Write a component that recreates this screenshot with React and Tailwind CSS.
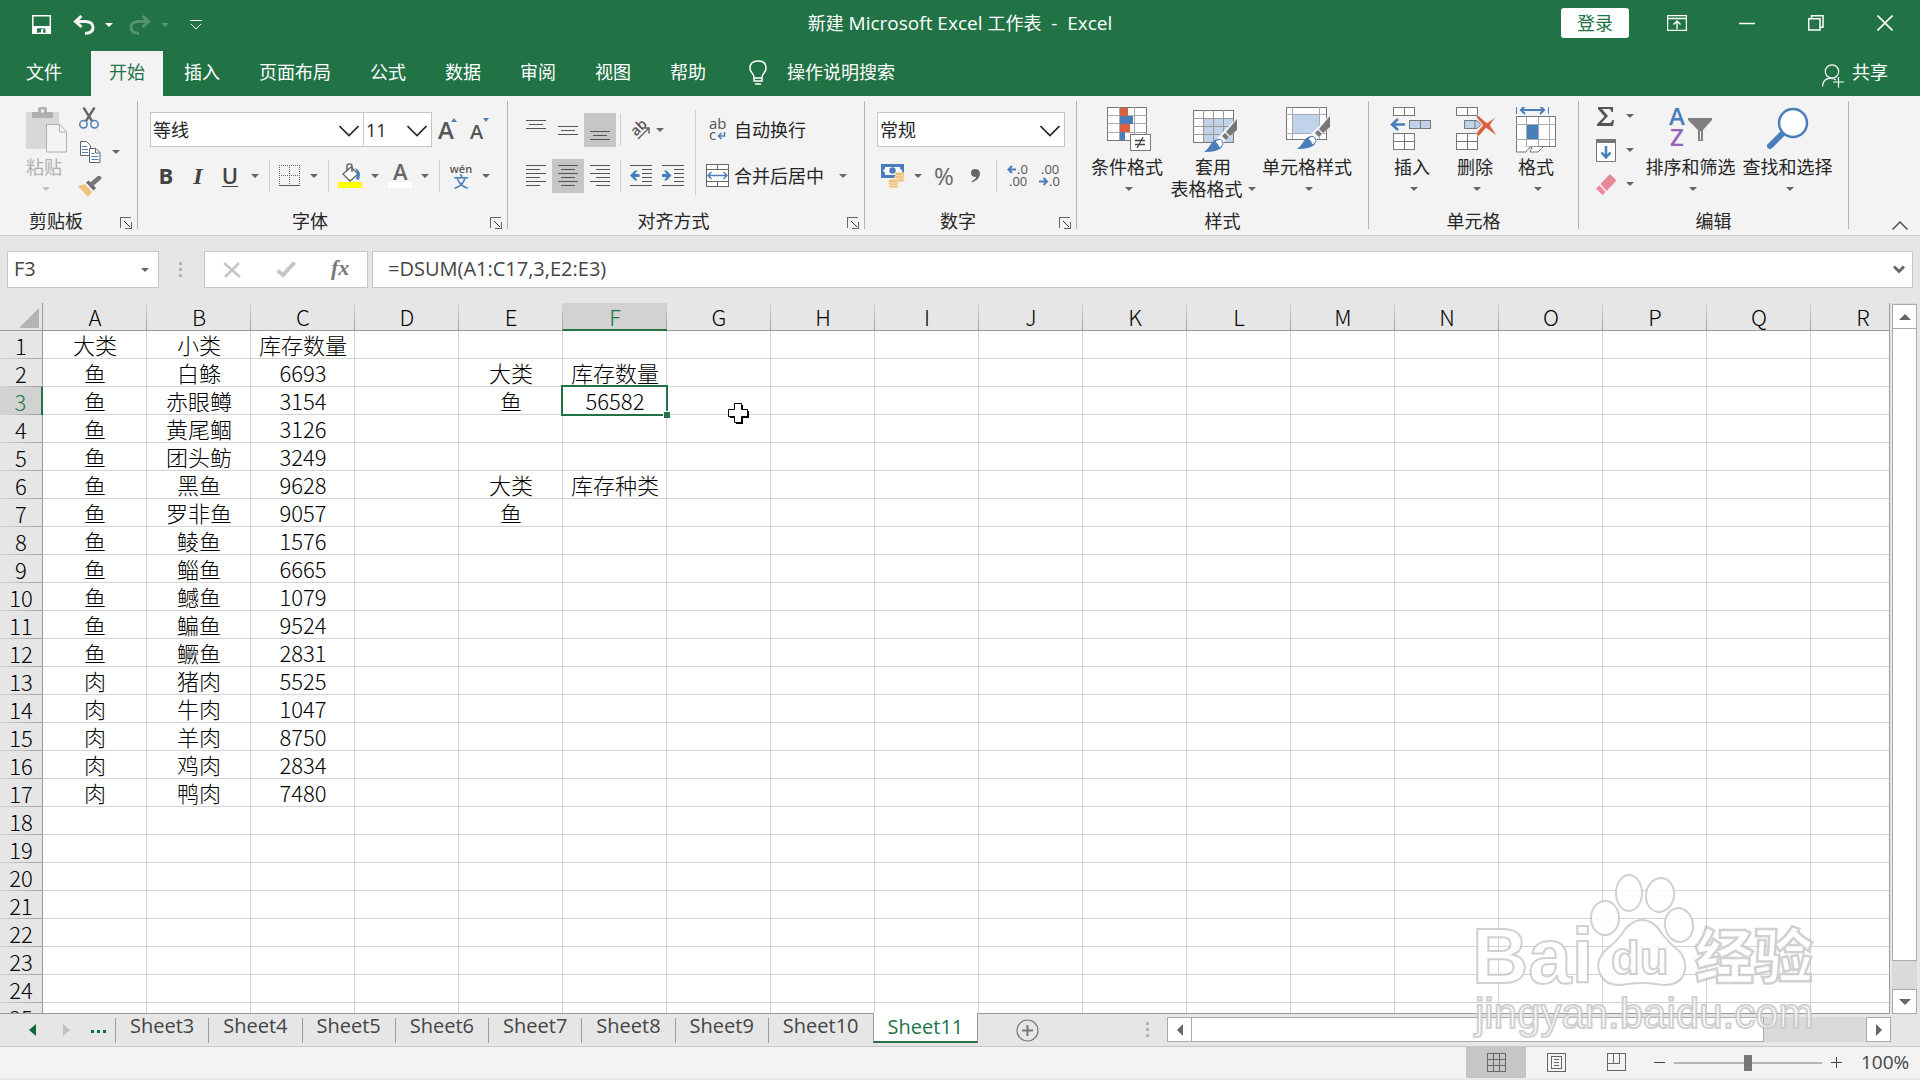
import { useState } from "react";

const COLUMNS = "ABCDEFGHIJKLMNOPQR".split("");

const STOCK = [
  ["鱼", "白鲦", "6693"],
  ["鱼", "赤眼鳟", "3154"],
  ["鱼", "黄尾鲴", "3126"],
  ["鱼", "团头鲂", "3249"],
  ["鱼", "黑鱼", "9628"],
  ["鱼", "罗非鱼", "9057"],
  ["鱼", "鲮鱼", "1576"],
  ["鱼", "鲻鱼", "6665"],
  ["鱼", "鳡鱼", "1079"],
  ["鱼", "鳊鱼", "9524"],
  ["鱼", "鳜鱼", "2831"],
  ["肉", "猪肉", "5525"],
  ["肉", "牛肉", "1047"],
  ["肉", "羊肉", "8750"],
  ["肉", "鸡肉", "2834"],
  ["肉", "鸭肉", "7480"],
];

const CELLS = {
  A1: "大类",
  B1: "小类",
  C1: "库存数量",
  E2: "大类",
  F2: "库存数量",
  E3: "鱼",
  F3: "56582",
  E6: "大类",
  F6: "库存种类",
  E7: "鱼",
};

STOCK.forEach(([kind, name, amount], index) => {
  CELLS[`A${index + 2}`] = kind;
  CELLS[`B${index + 2}`] = name;
  CELLS[`C${index + 2}`] = amount;
});

const TABS = ["开始", "插入", "页面布局", "公式", "数据", "审阅", "视图", "帮助"];

const SHEETS = [
  "Sheet3",
  "Sheet4",
  "Sheet5",
  "Sheet6",
  "Sheet7",
  "Sheet8",
  "Sheet9",
  "Sheet10",
  "Sheet11",
];

/* ---------- small shared parts ---------- */

const Caret = ({ className = "text-[#666666]" }) => (
  <svg width="8" height="4" viewBox="0 0 8 4" className={className} aria-hidden="true">
    <path d="M0 0h8L4 4z" fill="currentColor" />
  </svg>
);

const CaretButton = ({ label, className = "w-[18px]" }) => (
  <button aria-label={label} className={`flex h-full items-center justify-center ${className}`}>
    <Caret />
  </button>
);

const Tool = ({ label, className = "w-8", active, children }) => (
  <button
    aria-label={label}
    className={`flex h-full shrink-0 items-center justify-center ${className} ${
      active ? "bg-[#c6c6c6]" : ""
    }`}
  >
    {children}
  </button>
);

const Divider = () => <div className="mx-[5px] h-8 w-px shrink-0 bg-[#d0d0d0]" />;

const Chevron = () => (
  <svg width="20" height="12" viewBox="0 0 20 12" fill="none" className="pointer-events-none absolute right-1 top-3">
    <path d="M0.5 1 10 10.5 19.5 1" stroke="#262626" strokeWidth="1.6" />
  </svg>
);

const Combo = ({ label, value, className }) => (
  <div className={`relative h-[35px] border border-[#c6c6c6] bg-white ${className}`}>
    <select
      aria-label={label}
      className="h-full w-full appearance-none bg-transparent pl-[2px] text-lg leading-8 text-[#262626] outline-none"
    >
      <option>{value}</option>
    </select>
    <Chevron />
  </div>
);

const Group = ({ title, launcher, className, children }) => (
  <section className="flex shrink-0">
    <div className={`flex flex-col ${className}`}>
      <div className="flex h-[115px]">{children}</div>
      <div className="flex h-5 items-center">
        <span className="flex-1 text-center leading-5">{title}</span>
        {launcher && (
          <button aria-label={`${title}设置`} className="ml-2 mr-[5px] mt-1">
            <svg width="12" height="12" viewBox="0 0 12 12" fill="none" stroke="#666" shapeRendering="crispEdges">
              <path d="M0.5 11V0.5H11" />
              <path d="M11.5 5v6.5H5" />
              <path d="M4 4l6 6" stroke="#333" shapeRendering="auto" />
            </svg>
          </button>
        )}
      </div>
    </div>
    <div className="mt-[5px] h-32 w-px bg-[#b4b4b4]" />
  </section>
);

const BigButton = ({ icon, lines, className }) => (
  <button className={`flex h-full flex-col items-center pt-[10px] leading-[22px] ${className}`}>
    <span className="flex h-[50px] items-start justify-center pt-px">{icon}</span>
    <span className="whitespace-nowrap">{lines[0]}</span>
    <span className="flex h-[22px] items-center whitespace-nowrap">
      {lines[1]}
      <span className={lines[1] ? "ml-[5px]" : "ml-1"}>
        <Caret />
      </span>
    </span>
  </button>
);

/* ---------- ribbon icons ---------- */

const Lines = ({ rows, w = 20, h = 22, children }) => (
  <svg width={w} height={h} viewBox={`0 0 ${w} ${h}`} shapeRendering="crispEdges">
    {rows.map(([x, y, len]) => (
      <rect key={y} x={x} y={y} width={len} height="1" fill="#555" />
    ))}
    {children}
  </svg>
);

const PasteIcon = () => (
  <svg width="42" height="46" viewBox="0 0 42 46">
    <rect x="0" y="5" width="33" height="37" rx="1" fill="#d8d8d8" />
    <path d="M6 5h6V2q0-2 2-2h5q2 0 2 2v3h6v6H6z" fill="#b0b0b0" />
    <circle cx="16.500" cy="4" r="1.700" fill="#f3f3f3" />
    <path d="M20.500 17.500H34L40.500 24.500V45H20.500z" fill="#f3f3f3" stroke="#b0b0b0" />
    <path d="M33.500 17.500V25H40.500" fill="none" stroke="#b0b0b0" />
  </svg>
);

const CutIcon = () => (
  <svg width="20" height="22" viewBox="0 0 20 22" fill="none">
    <path d="M4.500 0.500 13 14M15.500 0.500 7 14" stroke="#666" strokeWidth="2.400" />
    <circle cx="4.500" cy="17.300" r="3.700" stroke="#4a7ebb" strokeWidth="1.500" />
    <circle cx="15.500" cy="17.300" r="3.700" stroke="#4a7ebb" strokeWidth="1.500" />
  </svg>
);

const CopyIcon = () => (
  <svg width="21" height="23" viewBox="0 0 21 23" fill="#fff" stroke="#666">
    <path d="M0.500 0.500H6.500L10.500 4.500V14.500H0.500z" />
    <path d="M2 5.500h5M2 8.500h6M2 11.500h6" stroke="#4a7ebb" />
    <path d="M9.500 7.500H16L20 11.500V21.500H9.500z" />
    <path d="M15.500 7.500V12H20" fill="none" />
    <path d="M11.500 12.500h3M11.500 15.500h7M11.500 18.500h7" stroke="#4a7ebb" />
  </svg>
);

const PainterIcon = () => (
  <svg width="24" height="21" viewBox="0 0 24 21">
    <path d="M0 10 7 8l7 8-4 5z" fill="#f0c27d" />
    <path d="M8 6.500 10.500 4.500 18 12 15.500 14.500z" fill="#666" />
    <path d="M14 8 21 2" stroke="#777" strokeWidth="4.500" strokeLinecap="round" />
  </svg>
);

const BordersIcon = () => (
  <svg width="22" height="22" viewBox="0 0 22 22" fill="none" stroke="#666" shapeRendering="crispEdges">
    <path d="M0.500 0V20M10.500 0V20M20.500 0V20M0 0.500H21M0 10.500H21" strokeDasharray="1 1" />
    <path d="M0 20.500H21" stroke="#555" />
  </svg>
);

const FillColorIcon = () => (
  <svg width="24" height="25" viewBox="0 0 24 25">
    <path d="M5 11 13 4 20 11 12 18z" fill="#fff" stroke="#666" strokeWidth="1.300" />
    <path d="M9 8V3q0-2 2.500-2T14 3v6" fill="none" stroke="#666" strokeWidth="1.500" />
    <path d="M17 5q5 2 5 7l-1 5-3-1 1-5q0-3-2-6z" fill="#4a7ebb" />
    <rect x="0" y="19" width="24" height="6" fill="#ffff00" />
  </svg>
);

const OrientationIcon = () => (
  <svg width="22" height="22" viewBox="0 0 22 22">
    <text x="3" y="16" transform="rotate(-45 7 12)" fontSize="14" fontFamily="Open Sans, sans-serif" fontWeight="600" fill="#555">
      ab
    </text>
    <path d="M9 20 20 9M14.500 9H20V14.500" fill="none" stroke="#666" strokeWidth="1.500" />
  </svg>
);

const WrapIcon = () => (
  <svg width="18" height="24" viewBox="0 0 18 24" fontFamily="Open Sans, sans-serif" fontSize="15" fill="#555">
    <text x="0" y="11">ab</text>
    <text x="0" y="22">c</text>
    <path d="M15.500 14v4H10M12.500 15l-3 3 3 3" fill="none" stroke="#4a7ebb" strokeWidth="1.500" />
  </svg>
);

const MergeIcon = () => (
  <svg width="24" height="24" viewBox="0 0 24 24" fill="none" stroke="#666" shapeRendering="crispEdges">
    <path d="M0.500 0.500H22.500V22.500H0.500z" fill="#fff" />
    <path d="M0 5.500H23M0 17.500H23M11.500 0V5M11.500 18V23" />
    <path d="M2 11.500H21M5.500 8 2 11.500 5.500 15M17.500 8 21 11.500 17.500 15" stroke="#4a7ebb" strokeWidth="1.500" shapeRendering="auto" />
  </svg>
);

const MoneyIcon = () => (
  <svg width="24" height="24" viewBox="0 0 24 24">
    <rect x="0" y="0" width="23" height="14" fill="#4a7ebb" />
    <path d="M4 3H19V4q0 2 2 2v3H4V8Q2 8 2 7t2-2z" fill="#fff" />
    <path d="M4 8H19V11H4z" fill="#fff" />
    <circle cx="11.500" cy="6.500" r="3.200" fill="#4a7ebb" />
    <g fill="#efc27c" stroke="#f8eeda" strokeWidth="0.700">
      <ellipse cx="18.500" cy="16" rx="5" ry="2" />
      <ellipse cx="18.500" cy="13" rx="5" ry="2" />
      <ellipse cx="18.500" cy="10" rx="5" ry="2" />
      <ellipse cx="12.500" cy="22" rx="5" ry="2" />
      <ellipse cx="12.500" cy="19.500" rx="5" ry="2" />
      <ellipse cx="12.500" cy="17" rx="5" ry="2" />
    </g>
  </svg>
);

const DecimalIcon = ({ more }) => (
  <svg width="24" height="24" viewBox="0 0 24 24" fontFamily="Open Sans, sans-serif" fontSize="13" fill="#555">
    <text x={more ? 11 : 3} y="10">{more ? ".0" : ".00"}</text>
    <text x={more ? 3 : 11} y="22">{more ? ".00" : ".0"}</text>
    {more ? (
      <path d="M10 5.500H3M6 2 2.500 5.500 6 9" fill="none" stroke="#4a7ebb" strokeWidth="2" />
    ) : (
      <path d="M1 17.500H8M5.500 14 9 17.500 5.500 21" fill="none" stroke="#4a7ebb" strokeWidth="2" />
    )}
  </svg>
);

const ConditionalIcon = () => (
  <svg width="48" height="46" viewBox="-4 0 48 46" shapeRendering="crispEdges">
    <path d="M0.500 0.500H39.500V33.500H0.500z" fill="#fff" stroke="#777" />
    <path d="M0 8.500H40M0 16.500H40M0 25.500H40M12.500 0V33M27.500 0V33" stroke="#aaa" />
    <rect x="13" y="1" width="8" height="8" fill="#d9603f" />
    <rect x="13" y="9" width="13" height="8" fill="#4a7ebb" />
    <rect x="13" y="17" width="10" height="8" fill="#d9603f" />
    <rect x="13" y="25" width="5" height="8" fill="#4a7ebb" />
    <path d="M23.500 27.500H43.500V43.500H23.500z" fill="#fff" stroke="#777" />
    <path d="M28 33.500H38M28 37.500H38M36 30 30 41" stroke="#444" strokeWidth="1.300" shapeRendering="auto" />
  </svg>
);

const BrushOver = () => (
  <g>
    <path d="M44 8 24 28 29 34 44 20z" fill="#f3f3f3" />
    <path d="M44 9 33 22 37 26 44 20z" fill="#777" />
    <path d="M32 23 36 27 33 30 29 26z" fill="#777" />
    <path d="M11 42Q15 39 18 34 21 29 26 29 31 31 29 37 26 42 11 42z" fill="#4a7ebb" />
    <path d="M22 32Q26 27 29 31 32 35 26 38 25 33 22 32z" fill="#fff" stroke="#4a7ebb" />
  </g>
);

const TableFormatIcon = () => (
  <svg width="48" height="46" viewBox="-4 0 48 46">
    <g transform="translate(0 3)">
      <g shapeRendering="crispEdges">
        <path d="M0.500 0.500H40.500V32.500H0.500z" fill="#fff" stroke="#777" />
        <rect x="11" y="9" width="29" height="23" fill="#c1d3ea" />
        <path d="M0 8.500H40M0 16.500H40M0 24.500H40M10.500 0V32M20.500 0V32M30.500 0V32" stroke="#999" />
      </g>
      <BrushOver />
    </g>
  </svg>
);

const CellStyleIcon = () => (
  <svg width="46" height="46" viewBox="-2 0 46 46">
    <g shapeRendering="crispEdges">
      <path d="M0.500 0.500H40.500V32.500H0.500z" fill="#fff" stroke="#777" />
      <rect x="7" y="8" width="27" height="18" fill="#c1d3ea" />
      <path d="M0 7.500H40M0 26.500H40M6.500 0V32M33.500 0V32" stroke="#aaa" />
    </g>
    <BrushOver />
  </svg>
);

const GridPieces = () => (
  <g fill="#fff" stroke="#777" shapeRendering="crispEdges">
    <path d="M3.500 0.500H24.500V8.500H3.500zM14 0.500V8.500" />
    <path d="M3.500 26.500H24.500V42.500H3.500zM14 26.500V42.500M3.500 34.500H24.500" />
  </g>
);

const InsertIcon = () => (
  <svg width="44" height="46" viewBox="0 0 44 46">
    <GridPieces />
    <path d="M19.500 13.500H40.500V21.500H19.500zM30 13.500V21.500" fill="#c1d3ea" stroke="#777" shapeRendering="crispEdges" />
    <path d="M15 17.500H2M8 12 2 17.500 8 23" fill="none" stroke="#4a7ebb" strokeWidth="2.500" />
  </svg>
);

const DeleteIcon = () => (
  <svg width="44" height="46" viewBox="0 0 44 46">
    <GridPieces />
    <path d="M11.500 13.500H24L28 17.500 24 21.500H11.500zM22 13.500V21.500" fill="#c1d3ea" stroke="#777" />
    <path d="M23 10Q25 7 28 11L34 16 43 10 37 18 44 29 33 21 26 29Q22 29 24 25L30 18z" fill="#d9603f" stroke="#f3f3f3" strokeWidth="0.600" />
  </svg>
);

const FormatIcon = () => (
  <svg width="41" height="46" viewBox="0 0 41 46">
    <g shapeRendering="crispEdges" fill="none">
      <path d="M0.500 9.500H39.500V39.500H0.500z" fill="#fff" stroke="#777" />
      <path d="M0 17.500H39M0 32.500H39M10.500 10V39M22.500 10V39M33.500 10V39" stroke="#aaa" />
      <rect x="11" y="18" width="11" height="14" fill="#4a7ebb" />
      <path d="M0.500 -1V7M32.500 -1V7" stroke="#4a7ebb" />
    </g>
    <path d="M5 3H28M9 -1 5 3 9 7M24 -1 28 3 24 7" fill="none" stroke="#4a7ebb" strokeWidth="2" />
    <path d="M0.500 39V45H10L14 40H16L14 45H22L27 40" fill="#fff" stroke="#777" />
  </svg>
);

const SortFilterIcon = () => (
  <svg width="44" height="46" viewBox="0 0 44 46" fontFamily="Open Sans, sans-serif" fontSize="24">
    <text x="0" y="18" fill="#4a7ebb" fontWeight="600">A</text>
    <text x="1" y="39" fill="#9664b8" fontWeight="600">Z</text>
    <path d="M19 11H43V13L34 23V34H29V23L19 13z" fill="#808080" />
    <path d="M31.500 24V33" stroke="#f3f3f3" strokeWidth="1" />
  </svg>
);

const FindIcon = () => (
  <svg width="42" height="46" viewBox="0 0 42 46">
    <path d="M3 39 15 27" stroke="#4a7ebb" strokeWidth="6" strokeLinecap="round" />
    <circle cx="26" cy="16" r="14" fill="#fff" stroke="#4a7ebb" strokeWidth="2.500" />
  </svg>
);

/* ---------- page sections ---------- */

const TitleBar = () => (
  <header className="grid h-[51px] grid-cols-[1fr_auto_1fr] items-start text-white">
    <div className="flex h-12 items-center pl-8 pt-0.5">
      <button aria-label="保存">
        <svg width="20" height="20" viewBox="0 0 20 20" fill="none" stroke="#fff" strokeWidth="1.500">
          <path d="M0.800 0.800H18.300V18.300H0.800z" />
          <path d="M1 11H18V18H13V15H11V18H9V14H6V18H1z" fill="#fff" stroke="none" />
          <path d="M5.500 18V13.800H13V18" stroke="#217346" strokeWidth="1" />
        </svg>
      </button>
      <button aria-label="撤消" className="ml-[21px]">
        <svg width="22" height="20" viewBox="0 0 22 20" fill="none" stroke="#f3f3f3" strokeWidth="3">
          <path d="M2 6.500H13Q20 7 20 12.500 20 18 12 18.500" />
          <path d="M8.500 1 2.500 6.500 8.500 12" />
        </svg>
      </button>
      <button aria-label="撤消历史" className="ml-[10px]">
        <Caret className="text-white" />
      </button>
      <button aria-label="恢复" className="ml-4 opacity-25">
        <svg width="22" height="20" viewBox="0 0 22 20" fill="none" stroke="#f3f3f3" strokeWidth="3">
          <path d="M20 6.500H9Q2 7 2 12.500 2 18 10 18.500" />
          <path d="M13.500 1 19.500 6.500 13.500 12" />
        </svg>
      </button>
      <button aria-label="恢复历史" className="ml-[10px] opacity-25">
        <Caret className="text-white" />
      </button>
      <button aria-label="自定义快速访问工具栏" className="ml-[21px]">
        <svg width="12" height="10" viewBox="0 0 12 10" fill="none" stroke="#fff">
          <path d="M0 0.500H12M1 4 6 9 11 4" />
        </svg>
      </button>
    </div>
    <h1 className="whitespace-pre text-[19px] leading-[46px]">
      <span className="text-lg">新建</span> Microsoft Excel <span className="text-lg">工作表</span>{"  -  Excel"}
    </h1>
    <div className="flex h-[46px] items-center justify-end pr-[27px]">
      <button className="mr-[38px] h-[30px] rounded-[3px] bg-white px-4 text-lg leading-[30px] text-[#217346]">登录</button>
      <button aria-label="功能区显示选项">
        <svg width="20" height="16" viewBox="0 0 20 16" fill="none" stroke="#fff">
          <path d="M0.500 0.500H19.500V15.500H0.500z" strokeWidth="1.400" />
          <path d="M1 3.500H19M10 14V6M6.500 9.500 10 6 13.500 9.500" strokeWidth="1.400" />
        </svg>
      </button>
      <button aria-label="最小化" className="ml-[52px]">
        <svg width="16" height="16" viewBox="0 0 16 16" stroke="#fff">
          <path d="M0 8.500H16" strokeWidth="1.500" />
        </svg>
      </button>
      <button aria-label="向下还原" className="ml-[53px]">
        <svg width="16" height="16" viewBox="0 0 16 16" fill="none" stroke="#fff" strokeWidth="1.500">
          <path d="M0.700 3.700H12V15H0.700zM3.500 3.500V0.700H15V12.200H12" />
        </svg>
      </button>
      <button aria-label="关闭" className="ml-[53px]">
        <svg width="16" height="16" viewBox="0 0 16 16" stroke="#fff" strokeWidth="1.600">
          <path d="M0.500 0.500 15.500 15.500M15.500 0.500 0.500 15.500" />
        </svg>
      </button>
    </div>
  </header>
);

const RibbonTabs = ({ active, onSelect }) => (
  <nav className="flex h-[45px] items-stretch text-lg leading-[42px] text-white">
    <button className="ml-2 mr-[11px] px-[18px] pb-[3px]">文件</button>
    <div className="flex gap-[3px]">
      {TABS.map((tab) => (
        <button
          key={tab}
          onClick={() => onSelect(tab)}
          className={`px-[18px] pb-[3px] ${tab === active ? "bg-[#f3f3f3] text-[#217346]" : ""}`}
        >
          {tab}
        </button>
      ))}
    </div>
    <button className="ml-[25px] flex items-center pb-[3px]">
      <svg width="18" height="25" viewBox="0 0 18 25" fill="none" stroke="#fff" strokeWidth="1.500">
        <path d="M5 18Q5 15 3 13 1 11 1 8 1 1 9 1T17 8Q17 11 15 13 13 15 13 18zM5 18V21H13V18M6 24H12" />
      </svg>
      <span className="ml-5">操作说明搜索</span>
    </button>
    <button className="ml-auto mr-8 flex items-center pb-[3px]">
      <svg width="22" height="24" viewBox="0 0 22 24" fill="none" stroke="#fff" strokeWidth="1.200" className="mt-2">
        <circle cx="10" cy="7.500" r="6.700" />
        <path d="M0.500 22.500Q1 14 9 14.500 12 14.500 14 16M16.500 13V23.500M11 18H22" />
      </svg>
      <span className="ml-2">共享</span>
    </button>
  </nav>
);

const Ribbon = () => (
  <div className="flex h-[140px] shrink-0 overflow-hidden border-b border-[#d2d2d2] bg-[#f3f3f3] text-lg text-[#262626]">
    <Group title="剪贴板" launcher className="w-[137px]">
      <button className="ml-[26px] mt-[11px] flex w-[42px] flex-col items-start text-[#b0b0b0]">
        <PasteIcon />
        <span className="mt-[3px] leading-[22px]">粘贴</span>
        <span className="ml-4 mt-[9px]">
          <Caret className="text-[#c0c0c0]" />
        </span>
      </button>
      <div className="ml-[10px] mt-[9px] flex flex-col items-start">
        <button aria-label="剪切" className="ml-px flex h-[26px] items-center">
          <CutIcon />
        </button>
        <div className="mt-2 flex h-[26px]">
          <button aria-label="复制" className="ml-0.5">
            <CopyIcon />
          </button>
          <CaretButton label="复制选项" className="ml-[6px] w-[18px]" />
        </div>
        <button aria-label="格式刷" className="mt-[11px]">
          <PainterIcon />
        </button>
      </div>
    </Group>

    <Group title="字体" launcher className="w-[369px]">
      <div className="flex flex-col gap-[11px] pl-3 pt-4">
        <div className="flex">
          <Combo label="字体" value="等线" className="w-[214px]" />
          <Combo label="字号" value="11" className="-ml-px w-[69px]" />
          <Tool label="增大字号">
            <svg width="22" height="26" viewBox="0 0 22 26">
              <text x="1" y="22" fontFamily="Open Sans, sans-serif" fontWeight="600" fontSize="24" fill="#555">A</text>
              <path d="M14 5H20L17 1z" fill="#4a7ebb" />
            </svg>
          </Tool>
          <Tool label="减小字号">
            <svg width="22" height="26" viewBox="0 0 22 26">
              <text x="1" y="22" fontFamily="Open Sans, sans-serif" fontWeight="600" fontSize="20" fill="#555">A</text>
              <path d="M14 1H20L17 5z" fill="#4a7ebb" />
            </svg>
          </Tool>
        </div>
        <div className="flex h-[35px] items-center text-[22px] text-[#444444]">
          <Tool label="加粗"><span className="font-bold">B</span></Tool>
          <Tool label="倾斜"><span className="font-['Liberation_Serif'] text-2xl font-bold italic">I</span></Tool>
          <Tool label="下划线"><span className="font-semibold underline decoration-1 underline-offset-2">U</span></Tool>
          <CaretButton label="下划线选项" />
          <Divider />
          <Tool label="边框" className="w-[30px]"><BordersIcon /></Tool>
          <CaretButton label="边框选项" />
          <Divider />
          <Tool label="填充颜色"><FillColorIcon /></Tool>
          <CaretButton label="填充颜色选项" />
          <Tool label="字体颜色">
            <svg width="24" height="25" viewBox="0 0 24 25">
              <text x="5" y="17" fontFamily="Open Sans, sans-serif" fontWeight="600" fontSize="22" fill="#666">A</text>
              <rect x="0" y="19" width="24" height="6" fill="#fff" />
            </svg>
          </Tool>
          <CaretButton label="字体颜色选项" />
          <Divider />
          <Tool label="拼音">
            <svg width="24" height="28" viewBox="0 0 24 28">
              <text x="12" y="11" textAnchor="middle" fontFamily="Open Sans, sans-serif" fontSize="11" fontWeight="600" fill="#555">wén</text>
              <text x="12" y="25" textAnchor="middle" fontFamily="Noto Sans CJK SC, sans-serif" fontSize="15" fontWeight="500" fill="#4a7ebb">文</text>
            </svg>
          </Tool>
          <CaretButton label="拼音选项" />
        </div>
      </div>
    </Group>

    <Group title="对齐方式" launcher className="w-[356px]">
      <div className="flex pl-3 pt-[17px]">
        <div className="flex w-[170px] flex-col gap-3">
          <div className="flex h-[34px] items-center">
            <Tool label="顶端对齐"><Lines rows={[[0, 1, 20], [3, 5, 14], [0, 9, 20]]} /></Tool>
            <Tool label="垂直居中"><Lines rows={[[0, 7, 20], [3, 11, 14], [0, 15, 20]]} /></Tool>
            <Tool label="底端对齐" active><Lines rows={[[0, 12, 20], [3, 16, 14], [0, 20, 20]]} /></Tool>
            <div className="ml-1 mr-[5px] h-8 w-px bg-[#d0d0d0]" />
            <Tool label="方向" className="w-7"><OrientationIcon /></Tool>
            <CaretButton label="方向选项" className="w-3" />
          </div>
          <div className="flex h-[34px] items-center">
            <Tool label="左对齐"><Lines rows={[[0, 0, 20], [0, 4, 14], [0, 8, 20], [0, 12, 14], [0, 16, 20], [0, 20, 14]]} /></Tool>
            <Tool label="居中" active><Lines rows={[[0, 0, 20], [3, 4, 14], [0, 8, 20], [3, 12, 14], [0, 16, 20], [3, 20, 14]]} /></Tool>
            <Tool label="右对齐"><Lines rows={[[0, 0, 20], [6, 4, 14], [0, 8, 20], [6, 12, 14], [0, 16, 20], [6, 20, 14]]} /></Tool>
            <div className="ml-1 mr-1 h-8 w-px bg-[#d0d0d0]" />
            <Tool label="减少缩进量">
              <Lines w={22} rows={[[0, 0, 22], [12, 4, 10], [12, 8, 10], [12, 12, 10], [12, 16, 10], [0, 20, 22]]}>
                <path d="M0 10.500 5 5.500H7.500L5 9H9.500V12H5L7.500 15.500H5z" fill="#4a7ebb" shapeRendering="auto" />
              </Lines>
            </Tool>
            <Tool label="增加缩进量">
              <Lines w={22} rows={[[0, 0, 22], [12, 4, 10], [12, 8, 10], [12, 12, 10], [12, 16, 10], [0, 20, 22]]}>
                <path d="M9.500 10.500 4.500 5.500H2L4.500 9H0V12H4.500L2 15.500H4.500z" fill="#4a7ebb" shapeRendering="auto" />
              </Lines>
            </Tool>
          </div>
        </div>
        <div className="mx-[5px] -mt-[3px] h-[85px] w-px bg-[#d0d0d0]" />
        <div className="flex flex-col gap-3 pl-[5px]">
          <button className="flex h-[34px] items-center">
            <span className="flex w-7 pl-[3px]"><WrapIcon /></span>
            自动换行
          </button>
          <div className="flex h-[34px] items-center">
            <button className="flex items-center">
              <span className="w-7"><MergeIcon /></span>
              合并后居中
            </button>
            <CaretButton label="合并选项" className="ml-[10px] w-[18px]" />
          </div>
        </div>
      </div>
    </Group>

    <Group title="数字" launcher className="w-[211px]">
      <div className="flex flex-col gap-[11px] pl-3 pt-4">
        <Combo label="数字格式" value="常规" className="w-[188px]" />
        <div className="flex h-[35px] items-center text-[#666666]">
          <Tool label="会计数字格式"><MoneyIcon /></Tool>
          <CaretButton label="会计数字格式选项" />
          <Tool label="百分比样式" className="w-[34px]"><span className="text-2xl">%</span></Tool>
          <Tool label="千位分隔样式" className="w-[30px]">
            <svg width="10" height="14" viewBox="0 0 10 14">
              <path d="M4 0Q9 0 9 5T1 13.500Q0 13 1 12 5 10 5 8 0 8 0 4 0 0 4 0z" fill="#666" />
            </svg>
          </Tool>
          <Divider />
          <Tool label="增加小数位数"><DecimalIcon more /></Tool>
          <Tool label="减少小数位数"><DecimalIcon /></Tool>
        </div>
      </div>
    </Group>

    <Group title="样式" className="w-[291px]">
      <div className="flex pl-[11px]">
        <BigButton icon={<ConditionalIcon />} lines={["条件格式"]} className="w-[78px]" />
        <BigButton icon={<TableFormatIcon />} lines={["套用", "表格格式"]} className="w-[94px]" />
        <BigButton icon={<CellStyleIcon />} lines={["单元格样式"]} className="w-[94px]" />
      </div>
    </Group>

    <Group title="单元格" className="w-[209px]">
      <div className="flex pl-[11px]">
        <BigButton icon={<InsertIcon />} lines={["插入"]} className="w-16" />
        <BigButton icon={<DeleteIcon />} lines={["删除"]} className="w-[62px]" />
        <BigButton icon={<FormatIcon />} lines={["格式"]} className="w-[60px]" />
      </div>
    </Group>

    <Group title="编辑" className="w-[269px]">
      <div className="flex flex-col pl-[11px] pt-0.5">
        <div className="flex h-9 items-center">
          <Tool label="自动求和">
            <svg width="18" height="19" viewBox="0 0 18 19">
              <path d="M1 0H16V5H14.500Q14 2 12 2H5L11 9 4.500 16H13Q14.500 16 15.500 13H17L16 19H0V17L7.500 9.500 1 2z" fill="#555" />
            </svg>
          </Tool>
          <CaretButton label="求和选项" className="w-4" />
        </div>
        <div className="flex h-8 items-center">
          <Tool label="填充">
            <svg width="20" height="23" viewBox="0 0 20 23">
              <path d="M0.500 0.500H19.500V22.500H0.500z" fill="#fff" stroke="#777" />
              <rect width="20" height="4" fill="#777" />
              <path d="M10 7V18M5.500 13.500 10 18.500 14.500 13.500" fill="none" stroke="#4a7ebb" strokeWidth="2.500" />
            </svg>
          </Tool>
          <CaretButton label="填充选项" className="w-4" />
        </div>
        <div className="flex h-9 items-center">
          <Tool label="清除">
            <svg width="21" height="21" viewBox="0 0 21 21" fill="#e88797">
              <path d="M14 0 20.500 6.500 10.500 17 4.500 10z" />
              <path d="M3.500 11.500 9.500 18 6.500 21 0 14.500z" />
            </svg>
          </Tool>
          <CaretButton label="清除选项" className="w-4" />
        </div>
      </div>
      <div className="ml-1 flex">
        <BigButton icon={<SortFilterIcon />} lines={["排序和筛选"]} className="w-[97px]" />
        <BigButton icon={<FindIcon />} lines={["查找和选择"]} className="w-[97px]" />
      </div>
    </Group>

    <button aria-label="折叠功能区" className="mb-[5px] ml-auto mr-3 self-end">
      <svg width="16" height="9" viewBox="0 0 16 9" fill="none" stroke="#555" strokeWidth="1.500">
        <path d="M0.500 8.500 8 1 15.500 8.500" />
      </svg>
    </button>
  </div>
);

const FormulaBar = () => (
  <div className="flex h-[67px] shrink-0 items-start pl-[7px] pr-[7px] pt-[15px] text-xl text-[#444444]">
    <div className="flex h-[37px] w-[152px] items-center border border-[#c6c6c6] bg-white">
      <input aria-label="名称框" defaultValue="F3" className="h-full w-0 flex-1 bg-transparent pb-0.5 pl-[6px] outline-none" />
      <CaretButton label="名称列表" className="mr-[5px] w-4" />
    </div>
    <div className="mx-5 flex h-[37px] flex-col justify-center gap-[3px]">
      <i className="size-[3px] bg-[#b4b4b4]" />
      <i className="size-[3px] bg-[#b4b4b4]" />
      <i className="size-[3px] bg-[#b4b4b4]" />
    </div>
    <div className="ml-0.5 flex h-[37px] w-[164px] items-center justify-around border border-[#c6c6c6] bg-white">
      <button aria-label="取消">
        <svg width="18" height="16" viewBox="0 0 18 16" stroke="#c6c6c6" strokeWidth="2.500">
          <path d="M1 1 17 15M16 1 2 15" />
        </svg>
      </button>
      <button aria-label="输入">
        <svg width="20" height="17" viewBox="0 0 20 17" fill="none" stroke="#c6c6c6" strokeWidth="4">
          <path d="M1.500 9.500 7 14 18.500 1.500" />
        </svg>
      </button>
      <button aria-label="插入函数" className="pb-1 font-['Liberation_Serif'] text-[22px] font-bold italic leading-8 text-[#777777]">
        fx
      </button>
    </div>
    <div className="ml-1 flex h-[37px] flex-1 items-center border border-[#c6c6c6] bg-white">
      <input
        aria-label="编辑栏"
        defaultValue="=DSUM(A1:C17,3,E2:E3)"
        className="h-full w-0 flex-1 bg-transparent pb-0.5 pl-[15px] outline-none"
      />
      <button aria-label="展开编辑栏" className="mr-[7px]">
        <svg width="12" height="9" viewBox="0 0 12 9" fill="none" stroke="#666" strokeWidth="3">
          <path d="M1 1.500 6 6.500 11 1.500" />
        </svg>
      </button>
    </div>
  </div>
);

const Cell = ({ value, selected }) => (
  <td className="relative h-7 border-b border-r border-[#d4d4d4] p-0 pl-px text-center">
    {value}
    {selected && (
      <div className="absolute -inset-0.5 z-10 border-2 border-[#217346]">
        <div className="absolute -bottom-1 -right-1 size-[7px] border-l border-t border-white bg-[#217346]" />
      </div>
    )}
  </td>
);

const Sheet = () => {
  const rows = Array.from({ length: 25 }, (_, i) => i + 1);

  return (
    <div className="relative min-w-0 flex-1 overflow-hidden border-b border-r border-[#9b9b9b] bg-white">
      <table className="w-[1915px] table-fixed border-separate border-spacing-0 text-[22px] font-light leading-[27px] text-black">
        <thead>
          <tr>
            <th className="h-7 w-[43px] border-b border-r border-[#9b9b9b] bg-[#e6e6e6] p-0">
              <svg width="20" height="20" viewBox="0 0 20 20" className="ml-auto mr-[3px] mt-0.5">
                <path d="M20 0V20H0z" fill="#b4b4b4" />
              </svg>
            </th>
            {COLUMNS.map((col) => (
              <th
                key={col}
                className={`h-7 p-0 font-light leading-[25px] bg-[linear-gradient(to_bottom,#d8d8d8,#9b9b9b)] bg-[length:1px_100%] bg-right bg-no-repeat ${
                  col === "F"
                    ? "border-b-2 border-[#217346] bg-[#d2d2d2] text-[#217346]"
                    : "border-b border-[#9b9b9b] bg-[#e6e6e6]"
                }`}
              >
                {col}
              </th>
            ))}
          </tr>
        </thead>
        <tbody>
          {rows.map((row) => (
            <tr key={row}>
              <th
                className={`h-7 p-0 font-light bg-[linear-gradient(to_right,#d8d8d8,#9b9b9b)] bg-[length:100%_1px] bg-bottom bg-no-repeat ${
                  row === 3
                    ? "border-r-2 border-[#217346] bg-[#d2d2d2] text-[#217346]"
                    : "border-r border-[#9b9b9b] bg-[#e6e6e6]"
                }`}
              >
                {row}
              </th>
              {COLUMNS.map((col) => (
                <Cell key={col} value={CELLS[col + row]} selected={col === "F" && row === 3} />
              ))}
            </tr>
          ))}
        </tbody>
      </table>

      {/* mouse pointer */}
      <svg width="22" height="22" viewBox="0 0 22 22" className="absolute left-[728px] top-[100px] z-20">
        <path d="M8 2H15V8H21V15H15V21H8V15H2V8H8z" fill="#000" />
        <path d="M6.500 0.500H13.500V6.500H19.500V13.500H13.500V19.500H6.500V13.500H0.500V6.500H6.500z" fill="#fff" stroke="#000" />
      </svg>
    </div>
  );
};

const ScrollArrow = ({ label, d }) => (
  <button
    aria-label={label}
    className="flex size-[25px] shrink-0 items-center justify-center border border-[#ababab] bg-white"
  >
    <svg width="12" height="12" viewBox="0 0 12 12">
      <path d={d} fill="#666" />
    </svg>
  </button>
);

const VerticalScroll = () => (
  <div className="ml-0.5 mr-[3px] flex w-[25px] flex-col bg-[#dadada] pt-px">
    <ScrollArrow label="向上滚动" d="M0 9H12L6 3z" />
    <div className="-mt-px w-full flex-1 border border-[#ababab] bg-white" />
    <div className="h-7" />
    <ScrollArrow label="向下滚动" d="M0 3H12L6 9z" />
  </div>
);

const SheetBar = ({ active, onSelect }) => (
  <div className="flex h-[33px] shrink-0 items-start border-b border-[#c6c6c6] text-xl text-[#444444]">
    <div className="flex h-[31px] w-[115px] items-center pl-[29px]">
      <button aria-label="上一张工作表">
        <svg width="7" height="12" viewBox="0 0 7 12"><path d="M7 0V12L0 6z" fill="#0f6b38" /></svg>
      </button>
      <button aria-label="下一张工作表" className="ml-[27px]">
        <svg width="7" height="12" viewBox="0 0 7 12"><path d="M0 0V12L7 6z" fill="#c0c0c0" /></svg>
      </button>
      <button aria-label="更多工作表" className="ml-[21px] mt-1 flex gap-[3px]">
        <i className="size-[3px] bg-[#0f6b38]" />
        <i className="size-[3px] bg-[#0f6b38]" />
        <i className="size-[3px] bg-[#0f6b38]" />
      </button>
    </div>
    {SHEETS.map((sheet) =>
      sheet === active ? (
        <button
          key={sheet}
          className="relative z-10 -mt-px h-[30px] border-b-2 border-l border-r border-b-[#217346] border-l-[#9b9b9b] border-r-[#9b9b9b] bg-white px-[14px] leading-[24px]"
        >
          <span className="text-[#217346]">{sheet}</span>
        </button>
      ) : (
        <button
          key={sheet}
          onClick={() => onSelect(sheet)}
          className="flex h-[29px] items-start leading-[23px]"
        >
          <span className="mt-1 h-[25px] w-px bg-[#9b9b9b]" />
          <span className="px-[14px]">{sheet}</span>
        </button>
      )
    )}
    <button aria-label="新工作表" className="ml-[38px] mt-[5px]">
      <svg width="23" height="23" viewBox="0 0 23 23" fill="none" stroke="#777">
        <circle cx="11.500" cy="11.500" r="10.500" strokeWidth="1.200" />
        <path d="M6 11.500H17M11.500 6V17" strokeWidth="2" />
      </svg>
    </button>
    <div className="ml-auto flex items-start">
      <div className="mr-[18px] mt-2 flex flex-col gap-[3px]">
        <i className="size-[3px] bg-[#b4b4b4]" />
        <i className="size-[3px] bg-[#b4b4b4]" />
        <i className="size-[3px] bg-[#b4b4b4]" />
      </div>
      <div className="mr-[29px] mt-[3px] flex w-[724px] bg-[#dadada]">
        <ScrollArrow label="向左滚动" d="M9 0V12L3 6z" />
        <div className="-ml-px h-[25px] flex-1 border border-[#ababab] bg-white" />
        <div className="w-[102px]" />
        <ScrollArrow label="向右滚动" d="M3 0V12L9 6z" />
      </div>
    </div>
  </div>
);

const StatusBar = () => (
  <footer className="flex h-[33px] shrink-0 items-center justify-end border-b-2 border-[#e9e9e9] bg-[#f3f3f3] pr-[11px] text-[#444444]">
    <button aria-label="普通" className="flex h-full w-[60px] items-center justify-center bg-[#c6c6c6]">
      <svg width="19" height="19" viewBox="0 0 19 19" fill="none" stroke="#666" shapeRendering="crispEdges">
        <path d="M0.500 0.500H18.500V18.500H0.500zM0 6.500H19M0 12.500H19M6.500 0V19M12.500 0V19" />
      </svg>
    </button>
    <button aria-label="页面布局视图" className="flex w-[60px] justify-center">
      <svg width="19" height="19" viewBox="0 0 19 19" fill="none" stroke="#666" shapeRendering="crispEdges">
        <path d="M0.500 0.500H18.500V18.500H0.500zM4.500 3.500H14.500V15.500H4.500zM7 6.500H12M7 9.500H12M7 12.500H12" />
      </svg>
    </button>
    <button aria-label="分页预览" className="flex w-[60px] justify-center">
      <svg width="19" height="19" viewBox="0 0 19 19" fill="none" stroke="#666" shapeRendering="crispEdges">
        <path d="M0.500 0.500H18.500V17.500H0.500zM6.500 0V10M12.500 0V10M0 10.500H13" />
      </svg>
    </button>
    <button aria-label="缩小" className="ml-2">
      <svg width="11" height="11" viewBox="0 0 11 11" stroke="#444"><path d="M0 5.500H11" /></svg>
    </button>
    <input
      type="range"
      aria-label="显示比例"
      defaultValue="50"
      className="mx-[9px] h-4 w-[148px] appearance-none bg-[linear-gradient(#b4b4b4,#b4b4b4)] bg-[length:100%_2px] bg-center bg-no-repeat [&::-webkit-slider-thumb]:h-4 [&::-webkit-slider-thumb]:w-2 [&::-webkit-slider-thumb]:appearance-none [&::-webkit-slider-thumb]:bg-[#777777]"
    />
    <button aria-label="放大">
      <svg width="11" height="11" viewBox="0 0 11 11" stroke="#444"><path d="M0 5.500H11M5.500 0V11" /></svg>
    </button>
    <button className="ml-[19px] w-12 whitespace-nowrap pb-0.5 text-[19px] leading-7">100%</button>
  </footer>
);

const Watermark = () => (
  <svg
    width="360"
    height="180"
    viewBox="0 0 360 180"
    className="pointer-events-none absolute bottom-[30px] right-[94px] z-30 opacity-85"
    fill="#fff"
    stroke="#cacaca"
    strokeWidth="2"
    fontFamily="Liberation Sans, Noto Sans CJK SC, sans-serif"
    fontWeight="700"
  >
    <ellipse cx="139" cy="48" rx="14" ry="17" />
    <ellipse cx="163" cy="23" rx="13" ry="18" />
    <ellipse cx="194" cy="25" rx="14" ry="17" transform="rotate(10 194 25)" />
    <ellipse cx="213" cy="55" rx="14" ry="17" transform="rotate(-8 213 55)" />
    <path d="M176 50Q188 50 196 64 204 74 214 82 222 92 218 104 212 118 190 114 176 112 162 114 140 118 134 104 128 90 142 78 150 72 156 64 164 50 176 50z" />
    <text x="6" y="113" fontSize="78">Bai</text>
    <text x="145" y="104" fontSize="47">du</text>
    <text x="229" y="108" fontSize="59" fontWeight="900" strokeWidth="2.500">经验</text>
    <text x="9" y="158" fontSize="42">
      <tspan fontWeight="400">jingyan.baidu.com</tspan>
    </text>
  </svg>
);

const App = () => {
  const [tab, setTab] = useState("开始");
  const [sheet, setSheet] = useState("Sheet11");

  return (
    <div className="relative flex h-screen flex-col overflow-hidden bg-[#e6e6e6] font-['Open_Sans','Noto_Sans_CJK_SC',sans-serif]">
      <div className="shrink-0 bg-[#217346]">
        <TitleBar />
        <RibbonTabs active={tab} onSelect={setTab} />
      </div>
      <Ribbon />
      <FormulaBar />
      <main className="flex min-h-0 flex-1 font-['Noto_Sans_CJK_SC',sans-serif]">
        <Sheet />
        <VerticalScroll />
      </main>
      <SheetBar active={sheet} onSelect={setSheet} />
      <StatusBar />
      <Watermark />
    </div>
  );
};

export default App;
